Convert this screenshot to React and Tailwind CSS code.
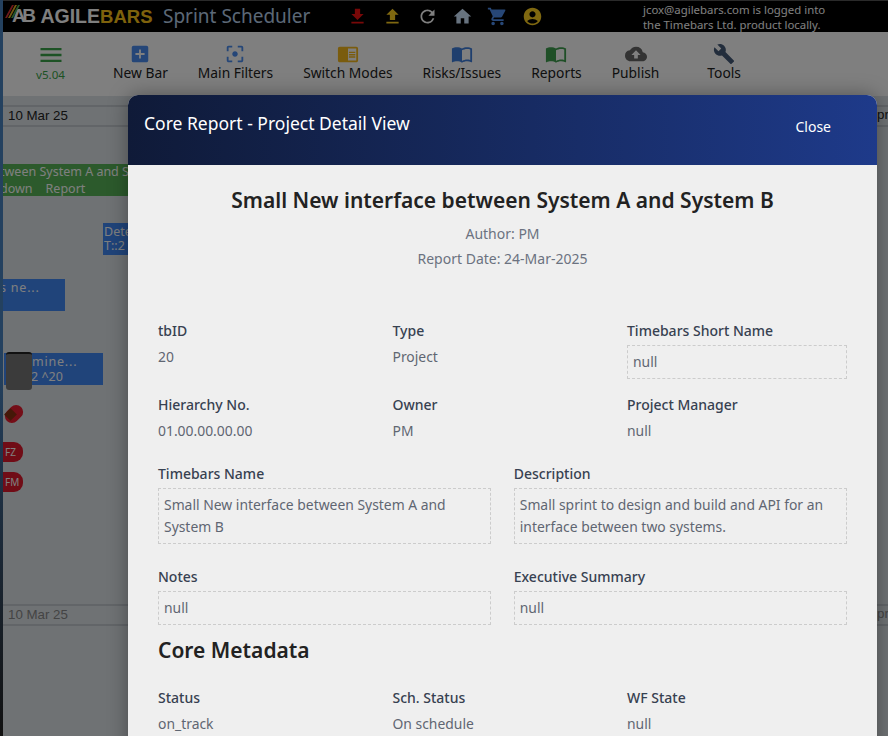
import {
  MdFileDownload, MdFileUpload, MdRefresh, MdHome, MdShoppingCart, MdAccountCircle,
  MdMenu, MdAddBox, MdFilterCenterFocus, MdChromeReaderMode, MdImportContacts, MdCloudUpload, MdBuild,
} from 'react-icons/md';

const ui = "font-['Noto_Sans',sans-serif]";

const tools = [
  { label: 'New Bar', Icon: MdAddBox, color: 'text-[#4a8df0]' },
  { label: 'Main Filters', Icon: MdFilterCenterFocus, color: 'text-[#4a8df0]' },
  { label: 'Switch Modes', Icon: MdChromeReaderMode, color: 'text-[#f5b81c]' },
  { label: 'Risks/Issues', Icon: MdImportContacts, color: 'text-[#3f7fdc]' },
  { label: 'Reports', Icon: MdImportContacts, color: 'text-[#3f9f4f]' },
  { label: 'Publish', Icon: MdCloudUpload, color: 'text-[#666]' },
];

function Field({ label, value, boxed }) {
  return (
    <div>
      <div className="text-[14px] leading-5 font-medium text-[#374151]">{label}</div>
      {boxed ? (
        <div className="mt-1 border border-dashed border-[#ccc] px-[5px] py-[5px] text-[13.9px] leading-[22px] text-[#5f6672]">{value}</div>
      ) : (
        <div className="mt-[6px] text-[13.9px] leading-5 text-[#5f6672]">{value}</div>
      )}
    </div>
  );
}

function GanttCanvas() {
  return (
    <div className="relative flex-1 bg-[#dfe5e8]">
      {/* date strips */}
      <div className="absolute left-0 right-0 top-[9px] h-[22px] border-y-2 border-[#c5cbd0] pl-[8px] font-['Liberation_Sans',sans-serif] text-[13.3px] leading-[18px] text-[#222]">10 Mar 25</div>
      <div className="absolute left-0 right-0 top-[508px] h-[22px] border-y-2 border-[#c5cbd0] pl-[8px] font-['Liberation_Sans',sans-serif] text-[13.3px] leading-[18px] text-[#888]">10 Mar 25</div>
      <div className="absolute left-[877px] top-[9px] h-[22px] w-[11px] overflow-hidden pt-px font-['Liberation_Sans',sans-serif] text-[13.3px] leading-[18px] text-[#222]">pr</div>
      <div className="absolute left-[877px] top-[508px] h-[22px] w-[11px] overflow-hidden pt-px font-['Liberation_Sans',sans-serif] text-[13.3px] leading-[18px] text-[#888]">pr</div>

      {/* bars */}
      <div className="absolute left-0 top-[68px] h-[32px] w-[128px] overflow-hidden bg-[#58b558] text-[12.5px] leading-[16px] whitespace-nowrap text-white">
        <div>tween System A and S</div>
        <div className="flex gap-[13px] pt-px"><span>down</span><span>Report</span></div>
      </div>
      <div className="absolute left-[103px] top-[127px] h-[32px] w-[30px] overflow-hidden bg-[#4088f5] text-[12.5px] leading-[14px] whitespace-nowrap text-white">
        <div className="pt-[2px] pl-px">Dete</div>
        <div className="pl-px">T::2</div>
      </div>
      <div className="absolute left-0 top-[183px] h-[32px] w-[65px] overflow-hidden bg-[#4088f5] pt-px text-[12.5px] leading-[16px] tracking-[0.8px] whitespace-nowrap text-white">s ne...</div>
      <div className="absolute left-[4px] top-[257px] h-[32px] w-[99px] overflow-hidden bg-[#4088f5] text-[12.5px] leading-[15px] whitespace-nowrap text-white">
        <div className="pl-[22px] pt-px tracking-[0.8px]">rmine...</div>
        <div className="pl-[27px]">2 ^20</div>
      </div>

      {/* trash can, pin and resource chips */}
      <div className="absolute left-[6px] top-[256px] h-[38px] w-[26px] rounded-[3px] border-t-2 border-[#222] bg-[#777]" />
      <div className="absolute left-[4px] top-[311px] h-[14px] w-[20px] -rotate-45 rounded-full bg-[#e81c30]" />
      <div className="absolute left-[6px] top-[314px] h-[9px] w-[9px] rotate-45 bg-[#8a3010]" />
      <div className="absolute left-0 top-[346px] h-[20px] w-[23px] rounded-r-[9px] bg-[#e0182c] pl-[5px] text-[10px] leading-[20px] text-white">FZ</div>
      <div className="absolute left-0 top-[376px] h-[20px] w-[23px] rounded-r-[9px] bg-[#e0182c] pl-[5px] text-[10px] leading-[20px] text-white">FM</div>
    </div>
  );
}

export default function App() {
  return (
    <div className={`relative h-[736px] w-[888px] overflow-hidden ${ui}`}>
      {/* App behind the dialog */}
      <div className="flex h-full flex-col">
        <div className="flex h-[32px] shrink-0 items-center border-t border-[#555] bg-black">
          <div className="relative flex w-[163px] items-center pl-[12px] font-['Liberation_Sans',sans-serif] font-bold whitespace-nowrap">
            <svg width="16" height="16" viewBox="0 0 16 16" className="absolute left-[5px] top-[1px]">
              <path d="M0 15 L7 2 H9 L2 15Z" fill="#d33" />
              <path d="M3 15 L10 2 H12 L5 15Z" fill="#e8b020" />
              <path d="M6 15 L13 2 H15 L8 15Z" fill="#4caf50" />
            </svg>
            <span className="mr-[8px] text-[19px] tracking-[-3.5px] text-white">AB</span>
            <span className="text-[19.5px] text-white">AGILE</span>
            <span className="text-[18.5px] text-[#fcc419]">BARS</span>
          </div>
          <div className="w-[184px] text-[19px] whitespace-nowrap text-[#b8d0ec]">Sprint Scheduler</div>
          <div className="flex w-[200px] items-center gap-[14px] text-[21px]">
            <MdFileDownload className="text-[#f01010]" />
            <MdFileUpload className="text-[#ffd020]" />
            <MdRefresh className="text-white" />
            <MdHome className="text-[#cfe6ff]" />
            <MdShoppingCart className="text-[#4f8fee]" />
            <MdAccountCircle className="text-[#ffd020]" />
          </div>
          <div className="ml-[96px] text-[11.4px] leading-[15px] whitespace-nowrap text-white">
            <div>jcox@agilebars.com is logged into</div>
            <div>the Timebars Ltd. product locally.</div>
          </div>
        </div>

        <div className="flex h-[64px] shrink-0 bg-white">
          <div className="flex w-[98px] flex-col items-center pl-[3px] pt-[9px] text-[#3ba54a]">
            <MdMenu className="text-[28px]" />
            <div className="-mt-[2px] text-[11.6px] leading-4">v5.04</div>
          </div>
          {tools.map(({ label, Icon, color }) => (
            <div key={label} className="flex flex-col items-center px-[15px] pt-[11px]">
              <Icon className={`text-[22px] ${color}`} />
              <div className="text-[13.8px] leading-4 whitespace-nowrap text-[#222]">{label}</div>
            </div>
          ))}
          <div className="ml-[18px] flex flex-col items-center px-[15px] pt-[11px]">
            <MdBuild className="text-[22px] text-[#445a78]" />
            <div className="text-[13.8px] leading-4 text-[#222]">Tools</div>
          </div>
        </div>

        <GanttCanvas />
      </div>

      {/* Dim layer */}
      <div className="absolute inset-0 bg-black/50" />
      <div className="absolute top-0 bottom-0 left-0 w-[3px] bg-gradient-to-b from-[#24415f] via-[#24415f] to-[#111]" />

      {/* Dialog */}
      <div className="absolute left-[128px] top-[95px] w-[749px] overflow-hidden rounded-t-[10px] bg-[#efefef] shadow-[0_0_20px_rgba(0,0,0,0.35)]">
        <div className="flex h-[70px] items-start justify-between bg-gradient-to-r from-[#0f1a38] to-[#1e3a8a] pl-[16px] pr-[46px] text-white">
          <div className="pt-[16px] text-[17.5px] leading-6">Core Report - Project Detail View</div>
          <div className="pt-[22px] text-[14px] leading-5">Close</div>
        </div>

        <div className="px-[30px]">
          <div className="pt-[20px] text-center">
            <h1 className="text-[21px] leading-[30px] font-semibold text-[#222]">Small New interface between System A and System B</h1>
            <p className="mt-[9px] text-[14px] leading-5 text-[#6b7280]">Author: PM</p>
            <p className="mt-[5px] text-[14px] leading-5 text-[#6b7280]">Report Date: 24-Mar-2025</p>
          </div>

          <div className="mt-[52px] grid grid-cols-3 gap-x-[14.5px]">
            <Field label="tbID" value="20" />
            <Field label="Type" value="Project" />
            <Field label="Timebars Short Name" value="null" boxed />
          </div>
          <div className="mt-[16px] grid grid-cols-3 gap-x-[14.5px]">
            <Field label="Hierarchy No." value="01.00.00.00.00" />
            <Field label="Owner" value="PM" />
            <Field label="Project Manager" value="null" />
          </div>

          <div className="mt-[23px] grid grid-cols-2 gap-x-[22.5px] gap-y-[23px]">
            <Field label="Timebars Name" value="Small New interface between System A and System B" boxed />
            <Field label="Description" value="Small sprint to design and build and API for an interface between two systems." boxed />
            <Field label="Notes" value="null" boxed />
            <Field label="Executive Summary" value="null" boxed />
          </div>

          <h2 className="mt-[9px] text-[21px] leading-[32px] font-semibold text-[#222]">Core Metadata</h2>

          <div className="mt-[22px] grid grid-cols-3 gap-x-[14.5px]">
            <Field label="Status" value="on_track" />
            <Field label="Sch. Status" value="On schedule" />
            <Field label="WF State" value="null" />
          </div>
          <div className="h-[60px]" />
        </div>
      </div>
    </div>
  );
}
